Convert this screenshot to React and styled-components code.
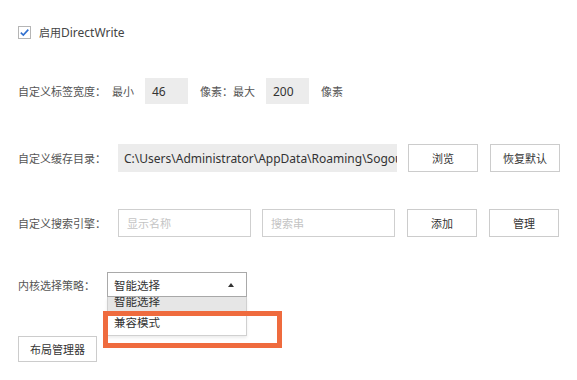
import React from 'react';
import styled, { createGlobalStyle } from 'styled-components';

const GlobalStyle = createGlobalStyle`
  body {
    margin: 0;
    background: #fff;
    font-family: "Noto Sans", "Noto Sans CJK SC", sans-serif;
    font-size: 11px;
    color: #444;
  }
`;

const Page = styled.div`
  position: relative;
  width: 577px;
  height: 380px;
  padding: 25px 0 0 18px;
  box-sizing: border-box;
  overflow: hidden;
`;

const Row = styled.div`
  display: flex;
  align-items: center;
  height: ${({ h }) => h}px;
  margin-top: ${({ mt }) => mt || 0}px;
`;

const CheckRow = styled.label`
  display: flex;
  align-items: center;
  gap: 8px;
  height: 14px;
  color: #444;
`;

const Latin = styled.span`
  font-size: 12px;
`;

const Box = styled.span`
  width: 13px;
  height: 13px;
  border: 1px solid #b5b5b5;
  box-sizing: border-box;
  background: #fff;
  display: flex;
  align-items: center;
  justify-content: center;
`;

const Label = styled.span`
  width: ${({ w }) => w}px;
  flex: none;
  white-space: nowrap;
  color: #555;
`;

const Text = styled.span`
  margin-right: ${({ mr }) => mr || 0}px;
  white-space: nowrap;
  color: #555;
`;

const GrayField = styled.div`
  width: ${({ w }) => w}px;
  flex: none;
  height: 100%;
  background: #ececec;
  color: #333;
  display: flex;
  align-items: center;
  padding-left: ${({ pl }) => pl || 7}px;
  box-sizing: border-box;
  margin-right: ${({ mr }) => mr || 0}px;
  white-space: nowrap;
  overflow: hidden;
  font-size: 12px;
`;

const Field = styled.div`
  width: ${({ w }) => w}px;
  flex: none;
  height: 100%;
  border: 1px solid #cfcfcf;
  box-sizing: border-box;
  color: #c4c4c4;
  display: flex;
  align-items: center;
  padding-left: 8px;
  margin-right: ${({ mr }) => mr || 0}px;
`;

const Button = styled.div`
  width: ${({ w }) => w || 70}px;
  flex: none;
  height: ${({ bh }) => (bh ? `${bh}px` : '100%')};
  border: 1px solid #cccccc;
  box-sizing: border-box;
  background: #fff;
  color: #333;
  display: flex;
  align-items: center;
  justify-content: center;
  margin-right: ${({ mr }) => mr || 0}px;
  margin-top: ${({ mt }) => mt || 0}px;
`;

const SelectWrap = styled.div`
  position: relative;
  width: 140px;
  height: 100%;
`;

const Select = styled.div`
  height: 100%;
  border: 1px solid #a9a9a9;
  box-sizing: border-box;
  display: flex;
  align-items: center;
  justify-content: space-between;
  padding: 0 12px 0 6px;
  color: #333;
  font-size: 11.5px;
`;

const Arrow = styled.span`
  width: 0;
  height: 0;
  border-left: 3.5px solid transparent;
  border-right: 3.5px solid transparent;
  border-bottom: 4px solid #333;
`;

const List = styled.div`
  position: absolute;
  top: 100%;
  left: 0;
  width: 140px;
  height: 39px;
  border: 1px solid #d0d0d0;
  border-top: none;
  box-sizing: border-box;
  background: #fff;
  overflow: hidden;
  box-shadow: 0 2px 3px rgba(0, 0, 0, 0.08);
`;

const Option = styled.div`
  height: ${({ ih }) => ih}px;
  margin-top: ${({ mt }) => mt || 0}px;
  line-height: 1;
  display: flex;
  align-items: center;
  padding-left: 6px;
  background: ${({ active }) => (active ? '#e6e6e6' : '#fff')};
  color: #333;
  font-size: 11.5px;
`;

const Highlight = styled.div`
  position: absolute;
  left: 103px;
  top: 311px;
  width: 179px;
  height: 37px;
  border: 5px solid #ef6b3e;
  box-sizing: border-box;
  pointer-events: none;
`;

export default function App() {
  return (
    <>
      <GlobalStyle />
      <Page>
        <CheckRow>
          <Box>
            <svg width="11" height="11" viewBox="0 0 11 11">
              <path d="M1.8 5.6 L4.3 8 L9.3 2.6" fill="none" stroke="#2f6fcf" strokeWidth="1.6" />
            </svg>
          </Box>
          <span>启用<Latin>DirectWrite</Latin></span>
        </CheckRow>

        <Row h={26} mt={39}>
          <Label w={94}>自定义标签宽度：</Label>
          <Text mr={11}>最小</Text>
          <GrayField w={43} mr={12}>46</GrayField>
          <Text mr={11}>像素：最大</Text>
          <GrayField w={43} mr={12}>200</GrayField>
          <Text>像素</Text>
        </Row>

        <Row h={28} mt={40}>
          <Label w={100}>自定义缓存目录：</Label>
          <GrayField w={279} mr={11} pl={6}>C:\Users\Administrator\AppData\Roaming\SogouExplorer</GrayField>
          <Button mr={12}>浏览</Button>
          <Button>恢复默认</Button>
        </Row>

        <Row h={28} mt={37}>
          <Label w={100}>自定义搜索引擎：</Label>
          <Field w={133} mr={11}>显示名称</Field>
          <Field w={133} mr={12}>搜索串</Field>
          <Button mr={12}>添加</Button>
          <Button>管理</Button>
        </Row>

        <Row h={25} mt={35}>
          <Label w={89}>内核选择策略：</Label>
          <SelectWrap>
            <Select>
              <span>智能选择</span>
              <Arrow />
            </Select>
            <List>
              <Option ih={18} mt={-4} active>智能选择</Option>
              <Option ih={24}>兼容模式</Option>
            </List>
          </SelectWrap>
        </Row>

        <Button w={79} bh={26} mt={39}>布局管理器</Button>

        <Highlight />
      </Page>
    </>
  );
}
